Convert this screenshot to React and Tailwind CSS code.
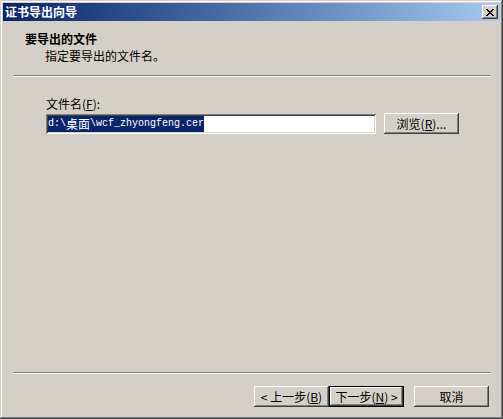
import React from "react";

const cjk = { fontFamily: '"Noto Sans CJK SC", "Liberation Sans", sans-serif' };
const mono = { fontFamily: '"Liberation Mono", monospace' };

function Btn({ children, isDefault, className = "" }) {
  const raised =
    "shadow-[inset_-1px_-1px_0_#404040,inset_1px_1px_0_#ffffff,inset_-2px_-2px_0_#808080,inset_2px_2px_0_#d4d0c8]";
  const def =
    "shadow-[inset_-1px_-1px_0_#000000,inset_1px_1px_0_#000000,inset_-2px_-2px_0_#404040,inset_2px_2px_0_#ffffff,inset_-3px_-3px_0_#808080]";
  return (
    <div
      className={`flex h-[21px] w-[75px] items-center justify-center bg-[#d4d0c8] text-[12px] leading-none text-black ${
        isDefault ? def : raised
      } ${className}`}
    >
      {children}
    </div>
  );
}

export default function App() {
  return (
    <div
      style={cjk}
      className="flex h-[419px] w-[503px] flex-col bg-[#d4d0c8] p-[3px] text-black shadow-[inset_-1px_-1px_0_#404040,inset_1px_1px_0_#d4d0c8,inset_-2px_-2px_0_#808080,inset_2px_2px_0_#ffffff]"
    >
      {/* title bar */}
      <div className="flex h-[18px] shrink-0 items-center justify-between bg-gradient-to-r from-[#0a246a] to-[#a6caf0] pl-[2px] pr-[2px]">
        <span className="text-[12px] font-bold leading-none text-white">证书导出向导</span>
        <div className="flex h-[14px] w-[16px] items-center justify-center bg-[#d4d0c8] shadow-[inset_-1px_-1px_0_#404040,inset_1px_1px_0_#ffffff,inset_-2px_-2px_0_#808080]">
          <svg width="8" height="7" viewBox="0 0 8 7" shapeRendering="crispEdges">
            <path
              d="M0 0h2v1h-2zM6 0h2v1h-2zM1 1h2v1h-2zM5 1h2v1h-2zM2 2h4v1h-4zM3 3h2v1h-2zM2 4h4v1h-4zM1 5h2v1h-2zM5 5h2v1h-2zM0 6h2v1h-2zM6 6h2v1h-2z"
              fill="#000"
            />
          </svg>
        </div>
      </div>

      {/* header */}
      <div className="flex h-[54px] shrink-0 flex-col pl-[22px] pt-[10px]">
        <div className="h-[17px] text-[12px] font-bold leading-[16px]">要导出的文件</div>
        <div className="pl-[20px] text-[12px] leading-[16px]">指定要导出的文件名。</div>
      </div>
      <div className="ml-[11px] mr-[10px] h-[2px] shrink-0 border-b border-t border-b-white border-t-[#808080]" />

      {/* body */}
      <div className="flex flex-1 flex-col pl-[43px] pt-[19px]">
        <div className="h-[17px] text-[12px] leading-[16px]">
          文件名(<span className="underline">F</span>):
        </div>
        <div className="flex items-center gap-[8px]">
          <div className="flex h-[20px] w-[330px] items-center bg-white pl-[2px] shadow-[inset_1px_1px_0_#808080,inset_-1px_-1px_0_#ffffff,inset_2px_2px_0_#404040,inset_-2px_-2px_0_#d4d0c8]">
            <span className="flex h-[16px] items-center bg-[#0a246a] text-[12px] leading-none text-white">
              <span style={mono} className="text-[10px]">d:\</span>
              <span>桌面</span>
              <span style={mono} className="text-[10px]">\wcf_zhyongfeng.cer</span>
            </span>
          </div>
          <Btn>
            浏览(<span className="underline">R</span>)...
          </Btn>
        </div>
      </div>

      <div className="ml-[11px] mr-[10px] h-[2px] shrink-0 border-b border-t border-b-white border-t-[#808080]" />

      {/* buttons */}
      <div className="flex shrink-0 justify-end pb-[9px] pr-[11px] pt-[12px]">
        <Btn>
          &lt; 上一步(<span className="underline">B</span>)
        </Btn>
        <Btn isDefault>
          下一步(<span className="underline">N</span>) &gt;
        </Btn>
        <Btn className="ml-[10px]">取消</Btn>
      </div>
    </div>
  );
}
